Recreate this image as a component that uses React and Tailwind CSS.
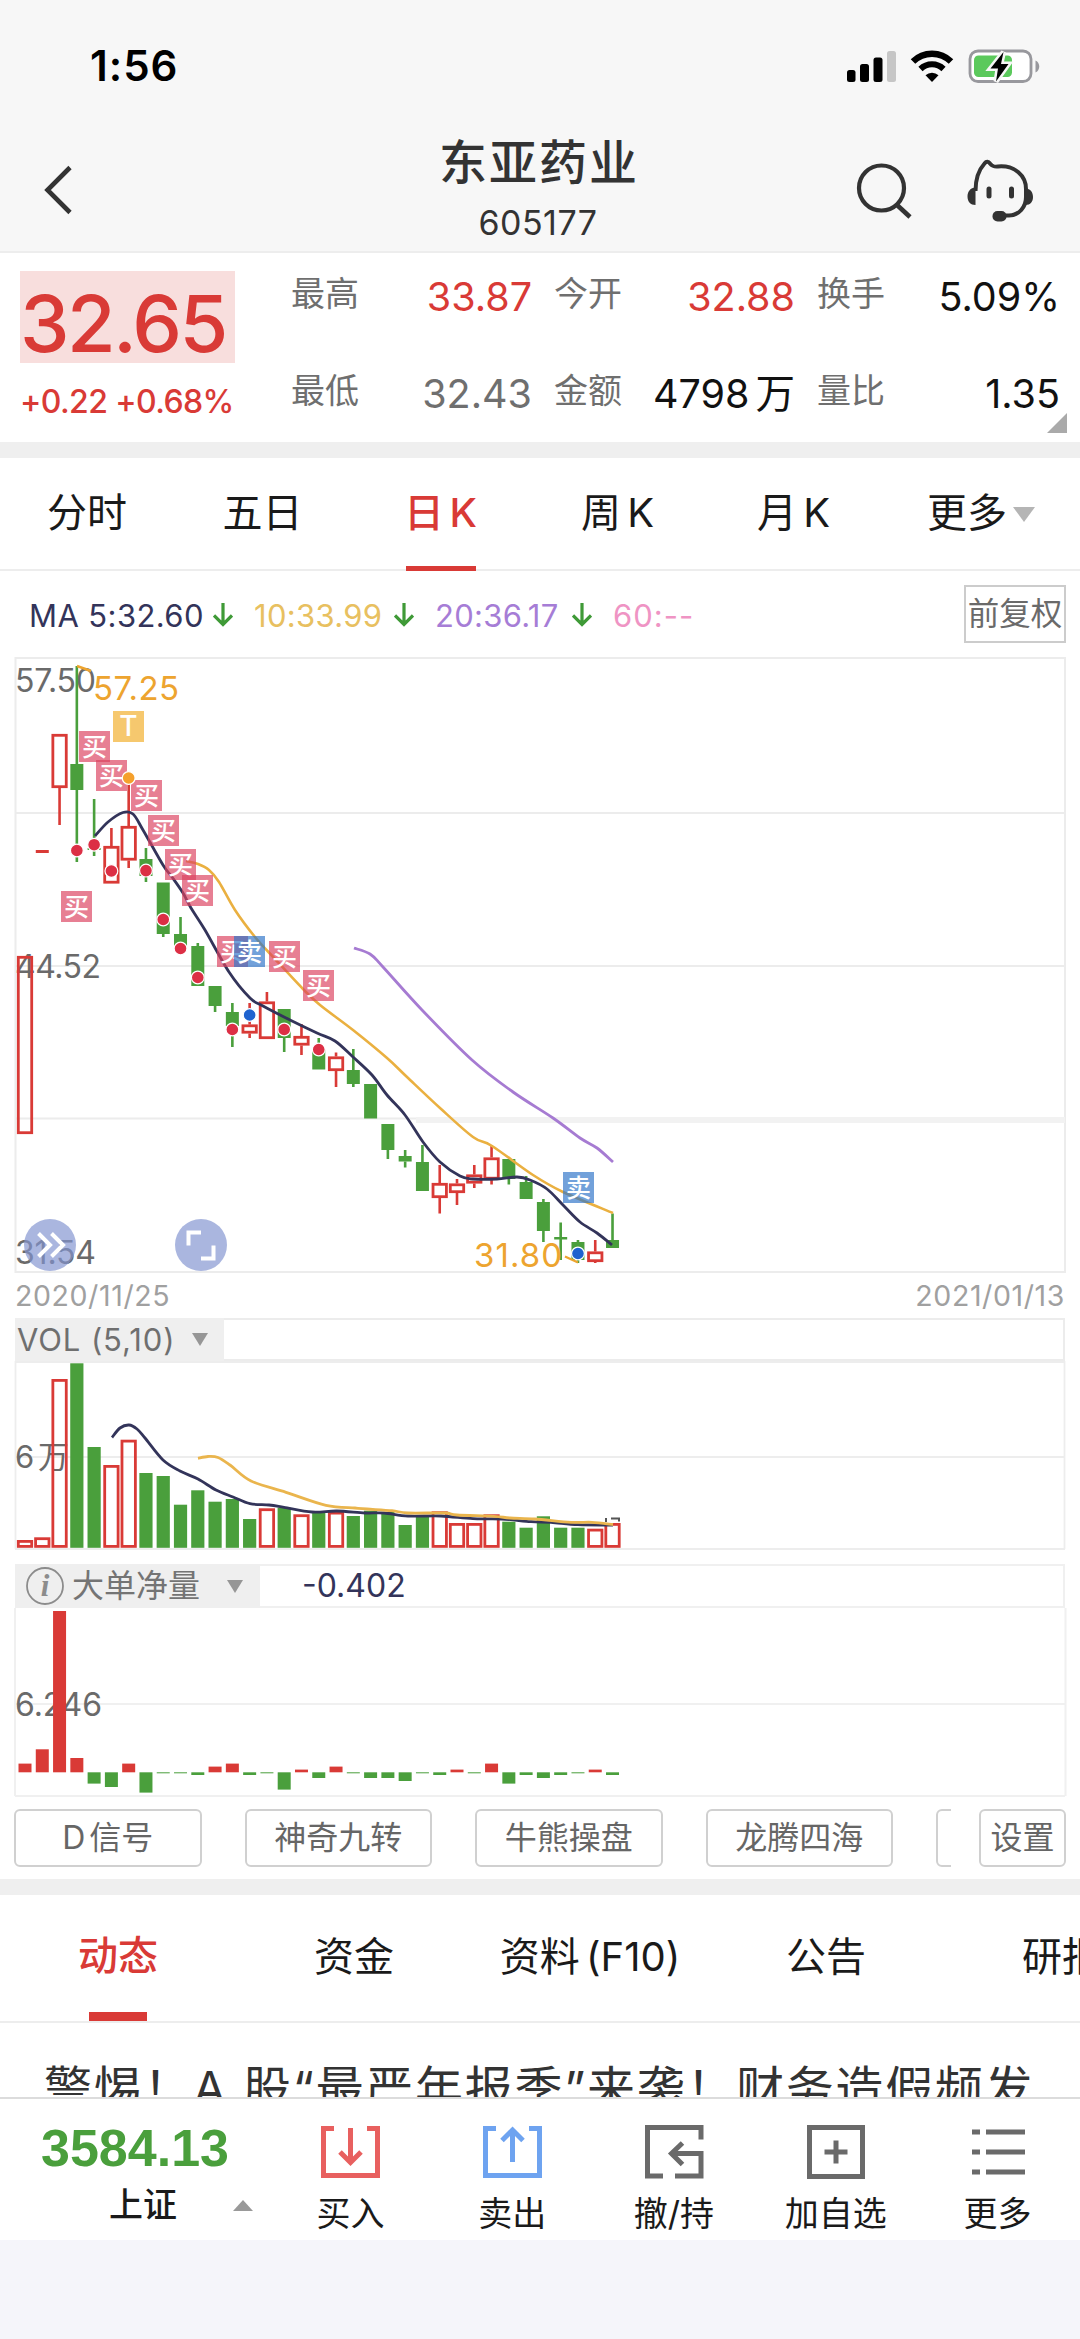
import { useState } from "react";
import clsx from "clsx";

const RED = "#d93a36";
const GREEN = "#4a9f3c";
const NAVY = "#33345a";
const ORANGE = "#eab54d";

// x centre of the n-th trading day
const dayX = (i) => 25 + i * 17.28;

// [up, high, bodyTop, bodyBottom, low]
const candles = [
  [1, 956, 956, 1134, 1134],
  [1, 850, 850, 853, 853],
  [1, 734, 734, 788, 825],
  [0, 666, 764, 790, 862],
  [0, 799, 848, 850, 856],
  [1, 828, 846, 883.5, 883.5],
  [1, 780, 826, 860.5, 868],
  [0, 848, 859, 876, 882],
  [0, 882.5, 882.5, 934, 937],
  [0, 917, 934, 948, 950],
  [0, 943, 946, 986, 986],
  [0, 986, 986, 1006, 1012],
  [0, 1003, 1012, 1026, 1047],
  [1, 1003, 1024.5, 1033.5, 1038],
  [1, 992, 1001.5, 1039, 1039],
  [0, 1009, 1009, 1038, 1052],
  [1, 1024, 1036, 1045.5, 1055],
  [0, 1038, 1050, 1069.5, 1069.5],
  [1, 1052.5, 1056.5, 1071, 1087],
  [0, 1049, 1070, 1084, 1087],
  [0, 1084, 1084, 1118.5, 1118.5],
  [0, 1124, 1124, 1150, 1159],
  [0, 1150, 1156, 1161.5, 1167.5],
  [0, 1145, 1162, 1191, 1191],
  [1, 1165, 1183, 1198, 1213.5],
  [1, 1179, 1183.5, 1193, 1205],
  [1, 1165, 1174.5, 1183.5, 1188],
  [1, 1145, 1157.5, 1179.5, 1184.5],
  [0, 1159, 1159, 1179, 1184.5],
  [0, 1176, 1182, 1199, 1199],
  [0, 1199, 1202, 1231, 1242],
  [0, 1222.5, 1237, 1239.5, 1260],
  [0, 1240, 1242, 1260, 1263],
  [1, 1240, 1251.5, 1262, 1263],
  [0, 1213.5, 1240, 1248, 1248],
];

const dots = [
  [3, 850.5, "#dc2f45"],
  [4, 844.7, "#dc2f45"],
  [5, 871, "#dc2f45"],
  [6, 778, "#f5a02c"],
  [7, 870.6, "#dc2f45"],
  [8, 919.5, "#dc2f45"],
  [9, 948.5, "#dc2f45"],
  [10, 977.5, "#dc2f45"],
  [12, 1029.5, "#dc2f45"],
  [13, 1015, "#1f63cf"],
  [15, 1029.5, "#dc2f45"],
  [17, 1049.5, "#dc2f45"],
  [32, 1253.5, "#1f63cf"],
];

const badges = [
  [113, 711, "T"],
  [79, 731, "买"],
  [96, 760, "买"],
  [131, 780, "买"],
  [148, 815, "买"],
  [165, 849, "买"],
  [182, 875, "买"],
  [61, 891, "买"],
  [217, 936, "买"],
  [234, 936, "卖"],
  [269, 941, "买"],
  [303, 970, "买"],
  [563, 1172, "卖"],
];

const badgeFill = { T: "#f5be55", 买: "#db4260", 卖: "#2f74c9" };

const ma5 = [
  [95, 836], [108, 822], [123, 812.5], [133, 814], [143, 830], [163, 865], [172, 877],
  [183, 893], [191, 908], [205, 930], [229, 972], [250, 998], [263, 1006], [290, 1020],
  [317, 1033], [335, 1041], [353, 1057], [372, 1075], [387, 1095], [405, 1115],
  [423, 1142], [440, 1162], [460, 1176], [473, 1179], [497, 1179], [517, 1177],
  [530, 1180], [547, 1189], [563, 1205], [580, 1222], [597, 1233], [612, 1245],
];

const ma10 = [
  [186, 861], [198, 864], [209, 870], [219, 882], [235, 910], [255, 937], [275, 959],
  [303, 989], [320, 1005], [353, 1030], [387, 1058], [407, 1077], [440, 1108],
  [473, 1137], [492, 1146], [533, 1175], [563, 1192], [613, 1213],
];

const ma20 = [
  [354, 948], [370, 954], [383, 967], [422, 1010], [472, 1060], [513, 1092], [553, 1118],
  [580, 1138], [597, 1148], [613, 1162],
];

// [up, top]
const volumes = [
  [1, 1541], [1, 1538.3], [1, 1380], [0, 1363.3], [0, 1447], [1, 1466], [1, 1440.7],
  [0, 1473], [0, 1476], [0, 1504.7], [0, 1490.3], [0, 1501.7], [0, 1499], [0, 1519],
  [1, 1509.3], [0, 1507.7], [1, 1515.3], [0, 1512.3], [1, 1512.7], [0, 1516],
  [0, 1510.7], [0, 1512], [0, 1525], [0, 1515], [1, 1512.3], [1, 1524], [1, 1524],
  [1, 1515.3], [0, 1521.7], [0, 1527.7], [0, 1516.3], [0, 1527.7], [0, 1527.7],
  [1, 1529.7], [1, 1524],
];

const vol5 = [
  [112, 1437.5], [120, 1428], [129, 1425], [137, 1429], [145, 1438], [163, 1460],
  [180, 1471], [198, 1479], [216, 1490], [233, 1497], [250, 1503.7], [269, 1505],
  [284, 1507.3], [312, 1512], [337, 1511], [365, 1513], [384, 1513], [408, 1516],
  [441, 1516], [473, 1518.7], [502, 1519], [531, 1521.7], [551, 1522.3], [578, 1524.7],
  [613, 1525],
];

const vol10 = [
  [198, 1458.3], [208, 1456.5], [218, 1457.5], [230, 1465], [251, 1481], [286, 1492.3],
  [326, 1505.3], [355, 1508], [367, 1509], [392, 1510.7], [408, 1513], [445, 1513],
  [457, 1515], [494, 1516.3], [510, 1518], [535, 1519], [571, 1522.3], [592, 1522.3],
  [613, 1524.5],
];

// signed height around the zero line
const netFlow = [
  8.7, 23, 161.3, 14.3, -11.3, -14.7, 8.7, -20.3, -1, -1, -2.7, 5.7, 8.7, -2.7, -1, -17.3,
  2.7, -5.7, 5.7, -1, -5.7, -5.7, -8.7, -1, -2.7, 2.7, -1, 8.7, -11.3, -2.7, -5.7, -2.7,
  -1, 2.7, -2.7,
];

// Catmull-Rom spline through the points
function smooth(points) {
  let d = `M${points[0][0]} ${points[0][1]}`;
  for (let i = 0; i < points.length - 1; i++) {
    const p0 = points[i - 1] || points[i];
    const p1 = points[i];
    const p2 = points[i + 1];
    const p3 = points[i + 2] || p2;
    d += `C${p1[0] + (p2[0] - p0[0]) / 6} ${p1[1] + (p2[1] - p0[1]) / 6} ${
      p2[0] - (p3[0] - p1[0]) / 6
    } ${p2[1] - (p3[1] - p1[1]) / 6} ${p2[0]} ${p2[1]}`;
  }
  return d;
}

function Line({ points, color, width = 2 }) {
  return <path d={smooth(points)} fill="none" stroke={color} strokeWidth={width} />;
}

function Candle({ index, data }) {
  const [up, high, top, bottom, low] = data;
  const x = dayX(index);
  const color = up ? RED : GREEN;
  if (bottom - top < 4) {
    return (
      <g fill={color}>
        <rect x={x - 6.5} y={top} width="13" height={bottom - top} />
        <rect x={x - 1.3} y={high} width="2.6" height={low - high} />
      </g>
    );
  }
  return (
    <g>
      <rect x={x - 1.3} y={high} width="2.6" height={top - high} fill={color} />
      <rect x={x - 1.3} y={bottom} width="2.6" height={low - bottom} fill={color} />
      {up ? (
        <rect
          x={x - 6.7}
          y={top + 1.3}
          width="13.4"
          height={bottom - top - 2.6}
          fill="none"
          stroke={color}
          strokeWidth="2.8"
        />
      ) : (
        <rect x={x - 6.5} y={top} width="13" height={bottom - top} fill={color} />
      )}
    </g>
  );
}

function Badge({ x, y, label }) {
  return (
    <g>
      <rect x={x} y={y} width="31" height="31" fill={badgeFill[label]} opacity={label === "T" ? 0.85 : 0.68} />
      <text
        x={x + 15.5}
        y={y + 24.5}
        textAnchor="middle"
        fontSize={label === "T" ? 28 : 25}
        fontWeight="500"
        fill="#fff"
      >
        {label}
      </text>
    </g>
  );
}

function StatusIcons() {
  return (
    <svg className="h-[40px] w-[200px]" viewBox="842 46 200 40">
      <rect x="847" y="70" width="8.5" height="12" rx="2.5" />
      <rect x="860" y="64" width="9" height="18" rx="2.5" />
      <rect x="873.5" y="57.5" width="9" height="24.5" rx="2.5" />
      <rect x="887" y="51" width="9" height="31" rx="2.5" fill="#c6c6c6" />
      <path d="M913 61.5a27 27 0 0 1 38 0" fill="none" stroke="#000" strokeWidth="6.4" />
      <path d="M920.5 69a16.5 16.5 0 0 1 23 0" fill="none" stroke="#000" strokeWidth="6" />
      <path d="M925.5 75.2a9.5 9.5 0 0 1 13 0L932 82z" />
      <rect x="970" y="51" width="61" height="30.5" rx="8" fill="#fff" stroke="#98989d" strokeWidth="2.8" />
      <rect x="974" y="55.5" width="38" height="21.5" rx="4.5" fill="#5bc95c" />
      <path d="M1035.5 60.5c5 2 5 10 0 12z" fill="#98989d" />
      <path
        d="M1003.5 52L990.5 68.5h7.5L996 81.5l12.5-17.5h-7.5z"
        stroke="#f7f7f7"
        strokeWidth="5"
      />
      <path d="M1003.5 52L990.5 68.5h7.5L996 81.5l12.5-17.5h-7.5z" />
    </svg>
  );
}

function Header() {
  return (
    <header className="flex h-[253px] flex-col border-b-2 border-[#ededed] bg-[#f7f7f7]">
      <div className="flex h-[130px] items-center justify-between pt-[2px] pr-[38px] pl-[90px]">
        <span className="text-[42px] leading-none font-semibold tracking-[1px] text-black">
          1:56
        </span>
        <StatusIcons />
      </div>
      <div className="flex h-[119px] items-center justify-between pr-[44px] pl-[41px]">
        <button className="flex w-[189px]">
          <svg className="h-[52px] w-[34px]" viewBox="0 0 34 52" fill="none" stroke="#333" strokeWidth="4.6">
            <path d="M29 3.5L6.5 26 29 48.5" />
          </svg>
        </button>
        <div className="flex flex-col items-center text-[#333]">
          <h1 className="-mr-[2px] text-[48px] leading-[60px] font-medium tracking-[2px]">东亚药业</h1>
          <span className="mt-[7px] text-[34px] leading-[46px] tracking-[0.5px]">605177</span>
        </div>
        <svg className="h-[66px] w-[190px]" viewBox="846 156 190 66" fill="none" stroke="#333">
          <circle cx="881.5" cy="187" r="22.5" strokeWidth="4.2" />
          <path d="M896.5 203.5L910 216" strokeWidth="4.6" />
          <path
            d="M975.5 190c0-12 4-22 9-27.500 2-2.500 4-2 5.500 0 2.500 3 4 3.500 8 3 17-1.500 28 9.500 28 22.500v8c0 10-7 18.500-17 18.500h-9"
            strokeWidth="4"
            strokeLinejoin="round"
          />
          <path
            d="M975.5 186.500v17.500c-5 0-8-3.5-8-8.5s3-9 8-9zM1025.5 187.5c5 0 7.5 4 7.5 8.5s-2.5 8-7.5 8z"
            fill="#333"
            stroke="none"
          />
          <rect x="986.5" y="185.5" width="5" height="12" rx="2.5" fill="#333" stroke="none" />
          <rect x="1009" y="185.5" width="5" height="12" rx="2.5" fill="#333" stroke="none" />
          <rect x="992.5" y="210" width="14" height="10.5" rx="5" fill="#333" stroke="none" />
        </svg>
      </div>
    </header>
  );
}

function Stat({ label, value, tone }) {
  return (
    <div className="flex items-start justify-between">
      <span className="text-[34px] leading-[40px] text-[#6f6f6f]">{label}</span>
      <span className={clsx("mt-[3px] text-[39.5px] leading-[40px] whitespace-nowrap [word-spacing:-5px]", tone)}>
        {value}
      </span>
    </div>
  );
}

function Quote() {
  return (
    <section className="relative flex h-[189px] bg-white">
      <div className="w-[272px] pt-[18px] pl-[20px]">
        <div className="h-[92px] w-[215px] bg-[#f8dedd] pt-[6px]">
          <span className="block text-[79px] leading-[92px] font-medium tracking-[-2.6px] text-[#d93a36]">
            32.65
          </span>
        </div>
        <div className="mt-[21px] text-[32px] leading-[36px] font-medium tracking-[-0.6px] whitespace-nowrap text-[#d93a36]">
          +0.22 +0.68%
        </div>
      </div>
      <div className="grid h-[170px] grid-cols-[241px_241px_243px] content-start gap-x-[22px] gap-y-[54px] pt-[21px] pl-[19px]">
        <Stat label="最高" value="33.87" tone="text-[#d93a36]" />
        <Stat label="今开" value="32.88" tone="text-[#d93a36]" />
        <Stat label="换手" value="5.09%" tone="text-[#111]" />
        <Stat label="最低" value="32.43" tone="text-[#6f6f6f]" />
        <Stat label="金额" value="4798 万" tone="text-[#111]" />
        <Stat label="量比" value="1.35" tone="text-[#111]" />
      </div>
      <svg className="absolute top-[160px] left-[1047px] h-[20px] w-[20px]" viewBox="0 0 20 20">
        <path d="M20 0v20H0z" fill="#aaa" />
      </svg>
    </section>
  );
}

function PeriodTabs() {
  const [active, setActive] = useState("日 K");
  const tabs = ["分时", "五日", "日 K", "周 K", "月 K", "更多"];
  return (
    <nav className="grid h-[113px] grid-cols-[174px_177px_179px_175px_177px_198px] border-b-2 border-[#ededed]">
      {tabs.map((tab) => (
        <button
          key={tab}
          onClick={() => setActive(tab)}
          className={clsx(
            "flex flex-col items-center text-[40px]",
            tab === active ? "font-medium text-[#d93a36]" : "text-[#1a1a1a]"
          )}
        >
          <span className="flex h-[108px] items-center gap-[6px] pt-[2px] whitespace-nowrap [word-spacing:-5px]">
            {tab}
            {tab === "更多" && (
              <svg className="mt-[2px] h-[15px] w-[22px]" viewBox="0 0 22 15">
                <path d="M0 0h22L11 15z" fill="#b5b5b5" />
              </svg>
            )}
          </span>
          {tab === active && <i className="h-[5px] w-[70px] bg-[#d93a36]" />}
        </button>
      ))}
    </nav>
  );
}

function DownArrow() {
  return (
    <svg className="h-[24px] w-[20px] shrink-0" viewBox="0 0 20 24" fill="none" stroke="#3f9a37" strokeWidth="3.2">
      <path d="M10 0v21.500M1 12.500l9 9 9-9" />
    </svg>
  );
}

function Averages() {
  return (
    <div className="flex h-[86px] items-center justify-between pr-[14px] pl-[29px]">
      <div className="flex items-center pt-[2px] text-[31px] leading-none tracking-[0.3px] whitespace-nowrap">
        <span className="w-[184px] tracking-[0.4px] text-[#33345a]">MA 5:32.60</span>
        <DownArrow />
        <span className="ml-[21px] w-[140px] text-[#e8c060]">10:33.99</span>
        <DownArrow />
        <span className="ml-[21px] w-[137px] text-[#a67dd6]">20:36.17</span>
        <DownArrow />
        <span className="ml-[21px] tracking-[1px] text-[#ef94c4]">60:--</span>
      </div>
      <button className="flex h-[58px] w-[102px] items-center justify-center border-2 border-[#ccc] text-[31.5px] whitespace-nowrap text-[#6a6a6a]">
        前复权
      </button>
    </div>
  );
}

function KChart() {
  return (
    <svg className="block h-[616px] w-[1080px]" viewBox="0 657 1080 616">
      <g fill="none" stroke="#ececec" strokeWidth="2">
        <path d="M15.5 657v616M1065 657v616M15 658h1050M15 813h1050M15 966h1050M15 1118.5h1050M15 1272h1050" />
        <path d="M416 1120h649" strokeWidth="6" stroke="#f2f2f2" />
      </g>
      <g fontSize="32" fill="#6a6a6a">
        <text x="15" y="691.5" textLength="81">57.50</text>
        <text x="15" y="977.5" textLength="86">44.52</text>
        <text x="15" y="1263.5" textLength="81">31.54</text>
      </g>
      {candles.map((data, i) => (
        <Candle key={i} index={i} data={data} />
      ))}
      <Line points={ma20} color="#a67bd2" width={2.8} />
      <Line points={ma10} color="#eab040" width={2.6} />
      <Line points={ma5} color={NAVY} width={2.8} />
      {badges.map(([x, y, label]) => (
        <Badge key={x} x={x} y={y} label={label} />
      ))}
      {dots.map(([i, y, fill]) => (
        <circle key={i} cx={dayX(i)} cy={y} r="6.4" fill={fill} stroke="#fff" strokeWidth="1.2" />
      ))}
      <g fontSize="33" fill="#eda42f">
        <text x="93" y="700" textLength="86">57.25</text>
        <text x="474" y="1267" textLength="88">31.80</text>
      </g>
      <path d="M77 666l14 5M565 1256.5l13 6" stroke="#eda42f" strokeWidth="2.4" />
      <g fill="#8294d0" fillOpacity="0.68">
        <circle cx="50" cy="1245" r="26" />
        <circle cx="201" cy="1245" r="26" />
      </g>
      <g fill="none" stroke="#fff" strokeWidth="4">
        <path d="M38.5 1233.5L50 1245l-11.5 11.5M51.5 1233.5L63 1245l-11.5 11.5" />
        <path d="M188.5 1245.5v-13H201M201 1258.500h12.500v-13" />
      </g>
    </svg>
  );
}

function Caret() {
  return (
    <svg className="h-[13px] w-[16px]" viewBox="0 0 16 13">
      <path d="M0 0h16L8 13z" fill="#969696" />
    </svg>
  );
}

function VolumeChart() {
  return (
    <>
      <div className="mx-[15px] flex h-[43px] border-2 border-[#ececec]">
        <div className="-my-[2px] -ml-[2px] flex w-[209px] items-center bg-[#efefef] pl-[2px] text-[31px] leading-none text-[#6f6f6f]">
          <span className="w-[175px] tracking-[0.9px] whitespace-nowrap">VOL (5,10)</span>
          <Caret />
        </div>
      </div>
      <svg className="block h-[189px] w-[1080px]" viewBox="0 1361 1080 189">
        <path d="M15.5 1361v188M1064.5 1361v188M15 1362h1050M15 1457h1050M15 1549h1050" fill="none" stroke="#ededed" strokeWidth="1.8" />
        <text x="15" y="1468" fontSize="31" fill="#6a6a6a">
          6
        </text>
        <text x="38" y="1468" fontSize="31" fill="#6a6a6a">
          万
        </text>
        {volumes.map(([up, top], i) =>
          up ? (
            <rect
              key={i}
              x={dayX(i) - 6.7}
              y={top + 0.4}
              width="13.4"
              height={1546 - top}
              fill="none"
              stroke={RED}
              strokeWidth="2.8"
            />
          ) : (
            <rect key={i} x={dayX(i) - 6.6} y={top} width="13.2" height={1547.8 - top} fill={GREEN} />
          )
        )}
        <Line points={vol5} color={NAVY} width={2.8} />
        <Line points={vol10} color={ORANGE} width={2.8} />
        <path d="M606 1518v4M611 1518.5h8v3" fill="none" stroke="#555" strokeWidth="2" />
      </svg>
    </>
  );
}

function NetFlowChart() {
  return (
    <>
      <div className="mx-[15px] mt-[14px] flex h-[44px] items-center border-2 border-[#f0f0f0] text-[32px] leading-none">
        <div className="-ml-[2px] flex h-[44px] w-[245px] shrink-0 items-center bg-[#efefef] pl-[10px] text-[#747474]">
          <svg className="h-[40px] w-[40px]" viewBox="0 0 40 40">
            <circle cx="20" cy="20" r="18" fill="none" stroke="#8c8c8c" strokeWidth="1.8" />
            <text
              x="20"
              y="30"
              textAnchor="middle"
              className="font-['Liberation_Serif',serif]"
              fontSize="31"
              fontStyle="italic"
              fontWeight="bold"
              fill="#8c8c8c"
            >
              i
            </text>
          </svg>
          <span className="mr-[27px] ml-[7px] whitespace-nowrap">大单净量</span>
          <Caret />
        </div>
        <span className="ml-[42px] text-[32px] text-[#33345a]">-0.402</span>
      </div>
      <svg className="block h-[189px] w-[1080px]" viewBox="0 1608 1080 189">
        <path d="M15 1608v188M1065.5 1608v188M15 1704h1050M15 1796h1050" fill="none" stroke="#f0f0f0" strokeWidth="2" />
        <text x="15" y="1716" fontSize="32" fill="#6a6a6a" textLength="87">
          6.246
        </text>
        {netFlow.map((v, i) => (
          <rect
            key={i}
            x={dayX(i) - 6.5}
            y={v > 0 ? 1772.3 - v : 1772.3}
            width="13"
            height={Math.abs(v)}
            fill={v > 0 ? RED : GREEN}
          />
        ))}
      </svg>
    </>
  );
}

function Indicators() {
  return (
    <div className="flex h-[82px] items-start pt-[12px] pr-[14px] pl-[14px] text-[32px] leading-none text-[#666]">
      <div className="flex h-[58px] w-[937px] gap-[43px] overflow-hidden">
        {["D 信号", "神奇九转", "牛熊操盘", "龙腾四海", ""].map((name) => (
          <button
            key={name}
            className="w-[187.5px] shrink-0 rounded-[6px] border-2 border-[#d0d0d0] [word-spacing:-5px]"
          >
            {name}
          </button>
        ))}
      </div>
      <button className="ml-auto h-[58px] w-[87px] rounded-[6px] border-2 border-[#d0d0d0] whitespace-nowrap">
        设置
      </button>
    </div>
  );
}

function InfoTabs() {
  const tabs = ["动态", "资金", "资料 (F10)", "公告", "研报"];
  return (
    <nav className="flex h-[128px] w-[1080px] overflow-hidden border-b-2 border-[#ededed]">
      {tabs.map((tab, i) => (
        <button
          key={tab}
          className={clsx(
            "flex w-[236px] shrink-0 flex-col items-center text-[40px]",
            i === 0 ? "font-medium text-[#d93a36]" : "text-[#1a1a1a]"
          )}
        >
          <span className="flex h-[119px] items-center pt-[4px] whitespace-nowrap [word-spacing:-5px]">
            {tab}
          </span>
          {i === 0 && <i className="h-[9px] w-[58px] bg-[#d93a36]" />}
        </button>
      ))}
    </nav>
  );
}

const actions = [
  { name: "买入", color: "#e8605f", d: "M15 3.500H4.500v47h54v-47H48M31.500 3v34M21 27l10.500 10.500L42 27" },
  { name: "卖出", color: "#6ea3f0", d: "M15 3.500H4.500v47h54v-47H48M31.500 37V5M21 15.500L31.500 5 42 15.500" },
  { name: "撤/持", color: "#6a6a6a", d: "M20 51H4.500V2.500H58v12M32 51h26V28.500H28M39.500 18L28.500 28.500l11 11" },
  { name: "加自选", color: "#6a6a6a", d: "M4.500 2.500H57.500v49H4.500zM31 15.500v23M19.500 27h23" },
  { name: "更多", color: "#6a6a6a", d: "M5 7h8M19 7h39M5 27h8M19 27h39M5 47h8M19 47h39" },
];

function BottomBar() {
  return (
    <footer className="flex h-[143px] border-t-2 border-[#dcdcdc] bg-white">
      <div className="w-[269.5px] shrink-0 pt-[24px] pl-[41px]">
        <div className="font-['Liberation_Sans',sans-serif] text-[52px] leading-[50px] font-bold text-[#4a9f3c]">
          3584.13
        </div>
        <div className="mt-[12px] flex items-center pl-[68px] text-[34px] leading-[40px] font-medium text-[#1a1a1a]">
          上证
          <svg className="ml-[56px] h-[11px] w-[20px]" viewBox="0 0 20 11">
            <path d="M0 11h20L10 0z" fill="#999" />
          </svg>
        </div>
      </div>
      {actions.map((item) => (
        <button key={item.name} className="flex w-[161.8px] shrink-0 flex-col items-center pt-[26px]">
          <svg className="h-[56px] w-[62px]" viewBox="0 0 62 56" fill="none" stroke={item.color} strokeWidth="5">
            <path d={item.d} />
          </svg>
          <span className="mt-[13px] text-[34px] leading-[40px] text-[#1a1a1a]">{item.name}</span>
        </button>
      ))}
    </footer>
  );
}

function App() {
  return (
    <div className="h-[2339px] w-[1080px] overflow-hidden bg-white font-['Inter','Noto_Sans_CJK_SC',sans-serif]">
      <Header />
      <Quote />
      <div className="h-[16px] bg-[#efefef]" />
      <PeriodTabs />
      <Averages />
      <KChart />
      <div className="flex h-[45px] items-center justify-between px-[15px] pt-[2px] text-[28.5px] leading-none tracking-[0.6px] text-[#a0a0a0]">
        <span>2020/11/25</span>
        <span>2021/01/13</span>
      </div>
      <VolumeChart />
      <NetFlowChart />
      <Indicators />
      <div className="h-[16px] bg-[#efefef]" />
      <InfoTabs />
      <div className="h-[74px] overflow-hidden pt-[31px] pl-[44px]">
        <p className="text-[48px] leading-[70px] tracking-[1.7px] whitespace-nowrap text-[#333]">
          警惕！A 股“最严年报季”来袭！财务造假频发
        </p>
      </div>
      <BottomBar />
      <div className="h-[99px] bg-[#f5f5fa]" />
    </div>
  );
}

export default App;
